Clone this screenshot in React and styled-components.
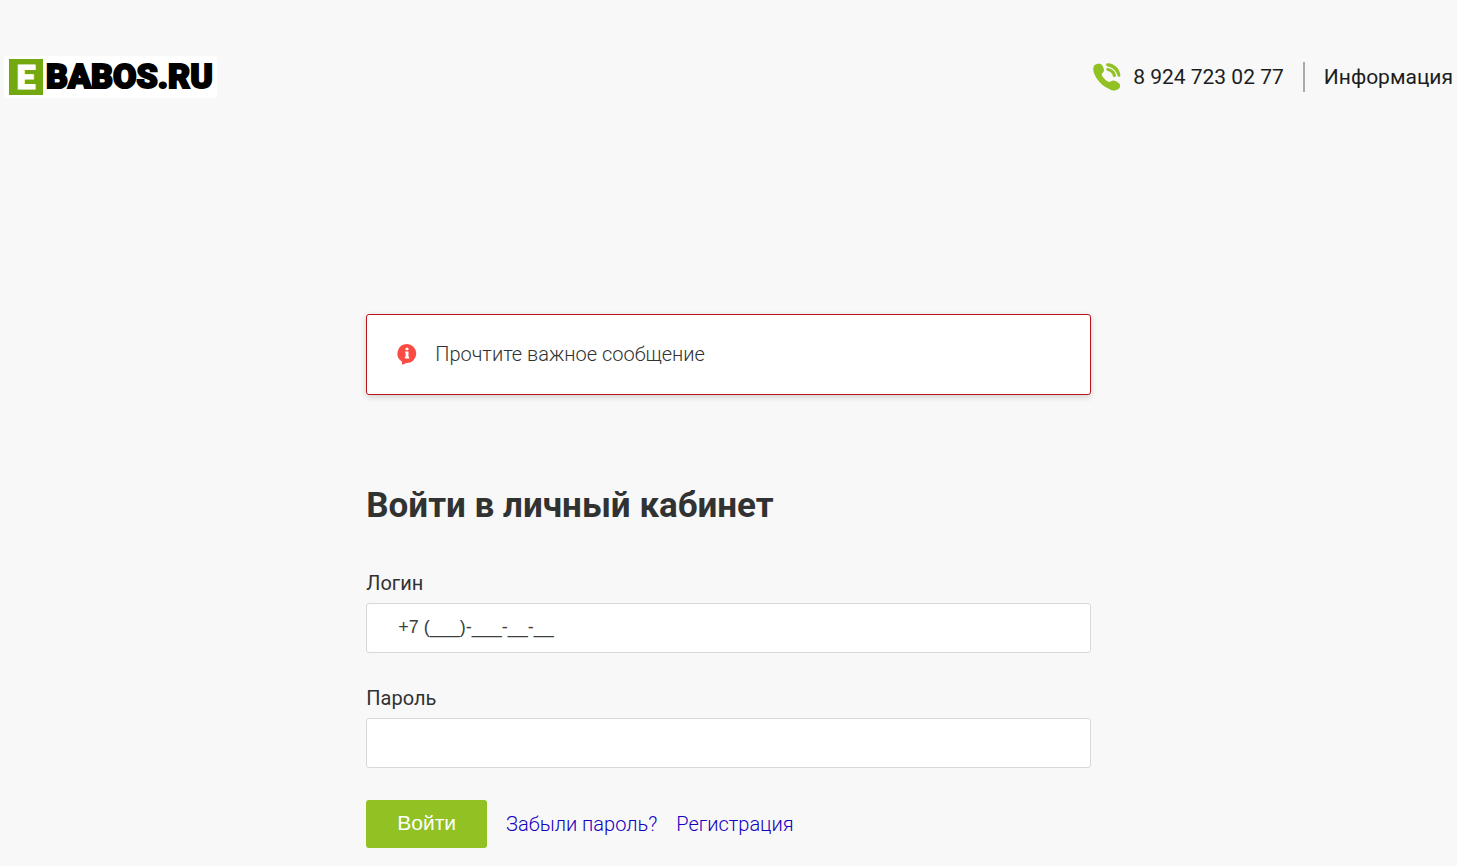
import styled, { createGlobalStyle } from 'styled-components';

const GlobalStyle = createGlobalStyle`
  * {
    box-sizing: border-box;
  }

  body {
    margin: 0;
    background: #f8f8f8;
    color: #303332;
    font-family: Roboto, "Open Sans", sans-serif;
    font-size: 20px;
    line-height: 24px;
  }
`;

const Page = styled.div`
  padding: 56px 4px 16px;
`;

const Header = styled.header`
  display: flex;
  align-items: center;
  justify-content: space-between;
`;

const Logo = styled.a`
  display: flex;
  align-items: center;
  gap: 3px;
  height: 42px;
  padding: 0 4px 0 5px;
  border-radius: 4px;
  background: #fff;
  color: #000;
  font-size: 34px;
  font-weight: 900;
  line-height: 40px;
  text-decoration: none;
  -webkit-text-stroke: 2px #000;
`;

const LogoMark = styled.span`
  width: 34px;
  height: 36px;
  background: #74a80f;
  color: #fff;
  line-height: 36px;
  text-align: center;
  -webkit-text-stroke: 1px #fff;
`;

const LogoText = styled.span`
  padding-bottom: 2px;
`;

const Contacts = styled.nav`
  display: flex;
  align-items: center;
  font-size: 21px;
`;

const NavLink = styled.a`
  display: flex;
  align-items: center;
  gap: 12px;
  color: #1b1e1d;
  text-decoration: none;
`;

const Divider = styled.span`
  width: 2px;
  height: 30px;
  margin: 0 19px;
  background: #aaa;
`;

const Main = styled.main`
  width: 50%;
  margin: 216px auto 0;
`;

const Notice = styled.a`
  display: flex;
  align-items: center;
  gap: 18px;
  padding: 27px 30px 28px;
  border: 1px solid #b8141e;
  border-radius: 3px;
  background: #fff;
  box-shadow: 0 2px 6px rgba(0, 0, 0, 0.16);
  color: #303332;
  font-weight: 300;
  text-decoration: none;
`;

const Title = styled.h1`
  margin: 90px 0 44px;
  font-size: 35px;
  font-weight: 700;
  line-height: 42px;
`;

const Field = styled.div`
  & + & {
    margin-top: 33px;
  }
`;

const Label = styled.label`
  display: block;
  margin-bottom: 8px;
`;

const Input = styled.input`
  display: block;
  width: 100%;
  height: 50px;
  padding: 0 31px 2px;
  border: 1px solid #d8d8d8;
  border-radius: 3px;
  background: #fff;
  color: #3c3f3e;
  font-family: "Liberation Sans", Arial, sans-serif;
  font-size: 18px;
`;

const Actions = styled.div`
  display: flex;
  align-items: center;
  gap: 19px;
  margin-top: 32px;
`;

const Submit = styled.button`
  height: 48px;
  padding: 0 31px 2px;
  border: 0;
  border-radius: 3px;
  background: #91c123;
  color: #fff;
  font-family: "Liberation Sans", Arial, sans-serif;
  font-size: 21px;
`;

const TextLink = styled.a`
  color: #1400c0;
  font-weight: 300;
  text-decoration: none;
`;

const PhoneIcon = () => (
  <svg width="28" height="28" viewBox="0 0 28 28" aria-hidden="true">
    <path
      fill="#91c123"
      d="M1.2 2.6C2.800.8 6 .2 8 1.200C9.800 2.200 10.800 5.200 11 7.200C11.200 9.400 8.800 9.800 8.700 11.400C9 13.800 13.800 18.600 16.400 18.900C18 18.900 18.600 17.600 20.400 17.600C22.600 17.800 25.800 19.600 26.800 21.200C27.600 22.800 26.800 25 25.400 26.100C23.600 27.600 21 27.800 18.200 26.900C10.200 24.200 3.200 17.200.8 9.600C0 7 0 4.300 1.200 2.600Z"
    />
    <path
      fill="#91c123"
      d="M14.300.2C21-.2 27.200 5.800 27.400 12.600C27.300 14.400 24.900 14.400 24.500 12.800C23.600 8.200 19.600 4.400 14.800 3.500C12.700 3.100 12.600.6 14.300.2Z"
    />
    <path
      fill="#91c123"
      d="M14.300 4.900C19 5 22.700 8.600 23 12.600C22.900 14.500 20.300 14.500 19.900 12.900C19.200 10.300 17.400 8.700 14.900 8.100C12.900 7.500 12.800 5.200 14.300 4.900Z"
    />
  </svg>
);

const InfoIcon = () => (
  <svg width="20" height="22" viewBox="0 0 20 22" aria-hidden="true">
    <path
      fill="#fb4b42"
      d="M10 1A9.500 9.500 0 1 1 9.500 20L5 21.800L5 18.600A9.500 9.500 0 0 1 10 1Z"
    />
    <rect x="8.500" y="4.800" width="3" height="2.400" rx="1" fill="#fff" />
    <path fill="#fff" d="M8 8.500H11.500V14H12.200V15.500H7.800V14H8.600V9.800H8Z" />
  </svg>
);

const App = () => {
  return (
    <>
      <GlobalStyle />
      <Page>
        <Header>
          <Logo href="#">
            <LogoMark>E</LogoMark>
            <LogoText>BABOS.RU</LogoText>
          </Logo>
          <Contacts>
            <NavLink href="tel:89247230277">
              <PhoneIcon />
              8 924 723 02 77
            </NavLink>
            <Divider />
            <NavLink href="#">Информация</NavLink>
          </Contacts>
        </Header>
        <Main>
          <Notice href="#">
            <InfoIcon />
            Прочтите важное сообщение
          </Notice>
          <Title>Войти в личный кабинет</Title>
          <form>
            <Field>
              <Label htmlFor="login">Логин</Label>
              <Input id="login" type="tel" defaultValue="+7 (___)-___-__-__" />
            </Field>
            <Field>
              <Label htmlFor="password">Пароль</Label>
              <Input id="password" type="password" />
            </Field>
            <Actions>
              <Submit type="button">Войти</Submit>
              <TextLink href="#">Забыли пароль?</TextLink>
              <TextLink href="#">Регистрация</TextLink>
            </Actions>
          </form>
        </Main>
      </Page>
    </>
  );
};

export default App;
